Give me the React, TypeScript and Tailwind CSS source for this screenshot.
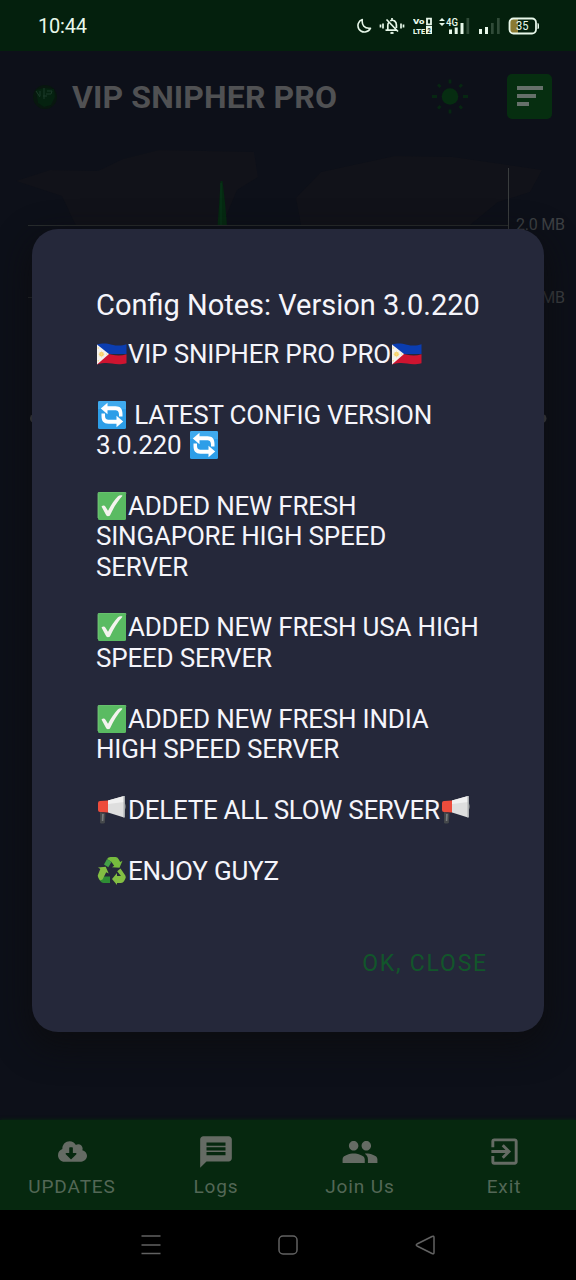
import type { ReactNode } from "react";
import { FaCloudDownloadAlt } from "react-icons/fa";
import { MdExitToApp, MdMessage, MdPeople } from "react-icons/md";

function Emoji({ children }: { children: ReactNode }) {
  return (
    <svg viewBox="0 0 32 28" className="inline-block h-7 w-8 align-[-5px]">
      {children}
    </svg>
  );
}

function Flag() {
  return (
    <Emoji>
      <path d="M1 4.500C7 2.700 11 3.500 16 4.700S26 6 30.500 4.200V14H1Z" fill="#0b3db0" />
      <path d="M1 14.500c6-1.600 10-.8 15 .2s10 1 14.500-.5v9c-6 1.400-10 1-14.500.3s-9-.9-15 1Z" fill="#ce1430" />
      <path d="M1 4.500 13 14 1 24.500Z" fill="#f4f2f0" />
      <circle cx="5.500" cy="14.200" r="2.200" fill="#f7c948" />
      <path d="M5.500 10.800v6.800M2.200 14.200h6.600M3.200 11.900l4.600 4.600M7.800 11.900l-4.600 4.600" stroke="#f9dc90" strokeWidth=".6" />
      <circle cx="2.200" cy="8" r=".7" fill="#f7d978" />
      <circle cx="2.200" cy="20.800" r=".7" fill="#f7d978" />
      <circle cx="10.800" cy="14.100" r=".7" fill="#f7d978" />
    </Emoji>
  );
}

function Refresh() {
  return (
    <Emoji>
      <rect x="2" y="0" width="28" height="28" rx="1.500" fill="#2d9ee8" />
      <path d="M2 1.500Q2 0 3.500 0h25Q30 0 30 1.500V8H2Z" fill="#3faaee" />
      <path d="M4.800 7.500 11.500 1.800v3.500h8c5 0 7 2.700 7 7.700v2.500h-3.500v-1.700c0-3.400-1.200-4.600-4.300-4.600h-7.200v4Z" fill="#fff" />
      <path d="M27.200 20.500 20.500 26.200v-3.500h-8c-5 0-7-2.700-7-7.700v-2.500h3.500v1.700c0 3.400 1.200 4.600 4.300 4.600h7.200v-4Z" fill="#fff" />
    </Emoji>
  );
}

function Check() {
  return (
    <Emoji>
      <rect x="2" y="0" width="28" height="28" rx="1.500" fill="#5abb62" />
      <path d="M2 26V1.500Q2 0 3.500 0h25Q30 0 30 1.500" fill="none" stroke="#7ccb80" strokeWidth=".8" />
      <path d="M5.500 14.500c1.500-1.500 3-1.300 4 .2l2.500 4.100c3-6 6.500-10.800 10-14.500 1.200-1.100 3.500-1.200 4.500-.5-5 5.500-9 12-12.300 19.200-.7 1.500-3.200 1.600-4 .2Z" fill="#f4f3ee" />
    </Emoji>
  );
}

function Megaphone() {
  return (
    <Emoji>
      <path d="m4 16 5.500 1.500-.7 9.500q-3 1.200-4.700 0Z" fill="#45484b" />
      <path d="M6 18h1.800l-.5 7H5.800Z" fill="#777b7d" />
      <path d="M2 7q0-2 2-2l8-.4v12L4 16q-2 0-2-2Z" fill="#ed4c3c" />
      <path d="M12 4.500 28 0v21.500l-16-5Z" fill="#dedede" />
      <path d="M12 4.500 28 0v6L12 8Z" fill="#f0f0f0" />
      <path d="M27.500 0h1.500v21.500h-1.500Z" fill="#a9acae" />
      <path d="M29 7.500q2 3 0 6Z" fill="#6b6e73" />
    </Emoji>
  );
}

function Recycle() {
  return (
    <Emoji>
      <path d="M11 2Q12.300 0 14.500 0h5q2 0 3 2l1.700 3 2.300-1.200-3 7-7.500-.6 2.200-1.400-2.700-3.900Z" fill="#76bb3e" />
      <path d="m11 2 4.500 2.900-3.200 5.400L8 7.500Z" fill="#43a047" />
      <path d="m24.500 11.500 4.800 7q1 1.700 0 3.300l-1.300 2.400q-1 1.800-3 1.800h-4v2l-5-6 5-6v3h4l-3.800-4.700Z" fill="#83be43" />
      <path d="M7.500 19.500H14V26H7.500q-2 0-3-1.700L2.500 21q2-1 5-1.500Z" fill="#2f8e35" />
      <path d="M4.300 11.900 2 10.500l7.700-.7 3 6.700-2.500-1.200-3.700 7.200L4 23.500 2.200 20.500q-1-1.700 0-3.300Z" fill="#83be43" />
    </Emoji>
  );
}

function StatusBar() {
  return (
    <div className="flex h-[51px] shrink-0 items-start bg-[#04200d] pl-[38px] text-[#e8f8ea]">
      <span className="mt-[14px] w-[319px] text-[20px] leading-6 tracking-[-0.2px]">10:44</span>
      <svg viewBox="0 0 15 20" className="mt-4 h-5 w-[15px] shrink-0">
        <path d="M5.300 3.500C4.500 9 7.500 13 13.500 12.200 11.500 16.500 5 17.500 2 13.200-.2 9.500 1.200 5 5.300 3.500Z" fill="none" stroke="currentColor" strokeWidth="1.600" strokeLinejoin="round" />
      </svg>
      <svg viewBox="0 0 26 20" className="ml-[7px] mt-4 h-5 w-[26px] shrink-0" fill="none" stroke="currentColor" strokeWidth="1.700">
        <path d="M1.500 8.500v3M4 7.500v5M24.500 8.500v3M22 7.500v5M6.500 14.200h11M8.800 14V9.500q0-2 1-3M11.200 4.800c3.500-1.700 6.200.9 6.200 4.100v3M7.500 3.500l11.500 12M13 2v2M11.500 16.500q1.500 1.200 3 0" />
      </svg>
      <svg viewBox="0 0 20 20" className="ml-2 mt-4 h-5 w-5 shrink-0" fill="currentColor">
        <text x="0" y="8" fontSize="8" fontWeight="900" textLength="11.500" lengthAdjust="spacingAndGlyphs">Vo</text>
        <text x="0" y="18" fontSize="8" fontWeight="900" textLength="12" lengthAdjust="spacingAndGlyphs">LTE</text>
        <path d="M14 2.700h4v5.600h-4Z" fill="none" stroke="currentColor" strokeWidth="1.800" />
        <rect x="13" y="10" width="6" height="8" />
        <text x="14.500" y="16.800" fontSize="7" fontWeight="700" fill="#04200d" textLength="3.200" lengthAdjust="spacingAndGlyphs">2</text>
      </svg>
      <svg viewBox="0 0 31 20" className="ml-[6px] mt-4 h-5 w-[31px] shrink-0" fill="currentColor">
        <path d="m3 2 3 3H0ZM3 10 0 7h6Z" />
        <text x="7" y="9.500" fontSize="11.500" fontWeight="500" textLength="12" lengthAdjust="spacingAndGlyphs">4G</text>
        <path d="M10 13.500h3V18h-3ZM15.700 11.500h3V18h-3ZM21.500 7h3v11h-3Z" />
        <path d="M27.500 2h2.700v16h-2.700Z" fill="#304b38" />
      </svg>
      <svg viewBox="0 0 22 20" className="ml-[9px] mt-4 h-5 w-[22px] shrink-0" fill="currentColor">
        <path d="M0 13h3v5H0ZM6 11h3v7H6Z" />
        <path d="M12 7h2.700v11H12ZM18 2h2.700v16H18Z" fill="#304b38" />
      </svg>
      <svg viewBox="0 0 32 20" className="ml-[7px] mt-4 h-5 w-8 shrink-0">
        <path d="M4 3h6v14H4q-2 0-2-3V6q0-3 2-3Z" fill="#8b7a32" />
        <rect x="1.500" y="2.500" width="26.500" height="15" rx="4" fill="none" stroke="currentColor" strokeWidth="1.800" />
        <path d="M29.500 7q1.500 0 1.500 1.500v3q0 1.500-1.500 1.500Z" fill="currentColor" />
        <text x="8" y="14" fontSize="12.500" textLength="12.500" lengthAdjust="spacingAndGlyphs" fill="currentColor">35</text>
      </svg>
    </div>
  );
}

function Header() {
  return (
    <header className="flex h-[91px] shrink-0 items-center pl-[31px] pr-6">
      <svg viewBox="0 0 28 28" className="h-7 w-7 shrink-0">
        <circle cx="14" cy="14" r="12" fill="#08170f" />
        <path d="m5 7 8-2 10 1 1 8-4 8-7 2-6-4Z" fill="#052210" />
        <path d="m5 8 4 6M9 8v5M13 5v11M12 13h4M16 8h5l-1 3h-5" stroke="#1d3a2a" strokeWidth="1" fill="none" />
      </svg>
      <h1 className="ml-[13px] mt-px w-[356px] whitespace-nowrap text-[32px] font-bold leading-10 tracking-[0.12px] text-[#505153]">VIP SNIPHER PRO</h1>
      <svg viewBox="0 0 44 44" className="h-11 w-11 shrink-0">
        <circle cx="22" cy="21.500" r="8.300" fill="#062d11" />
        <path d="M22 4.500v4M22 34.500v4M4 21.500h5M35 21.500h5M10 9.500l2.500 2.500M31.500 31l2.500 2.500M10 33.500l2.500-2.500M31.500 12l2.500-2.500" stroke="#072712" strokeWidth="2.800" />
      </svg>
      <button className="ml-[35px] flex h-[45px] w-[45px] shrink-0 flex-col gap-1 rounded-[5px] bg-[#062e10] pl-[10px] pt-3">
        <span className="h-1 w-[26px] bg-[#66706a]" />
        <span className="h-1 w-[19px] bg-[#66706a]" />
        <span className="h-1 w-3 bg-[#66706a]" />
      </button>
    </header>
  );
}

function TrafficChart() {
  return (
    <svg viewBox="0 0 576 300" className="mt-px h-[300px] w-[576px] shrink-0">
      <g fill="#111219">
        <path d="M16 38 50 27l48 1 25-12 36-9 95 2 4 25-21 13-15 36H76L62 53Z" />
        <path d="m296 55 25-26 74-16 58 1 89 13-12 22-32 10-28 23H301Z" />
      </g>
      <path d="M217.500 83q2-25 3-45h2q3 22 4.500 45Z" fill="#052a11" />
      <path d="M221 40v43" stroke="#08391a" />
      <path d="M28 82.500h480M28 154.500h480" stroke="#292d2e" />
      <path d="M508.500 25v232" stroke="#3a3d3e" />
      <text x="516" y="87" fontSize="16" textLength="49" fill="#3e4144">2.0 MB</text>
      <text x="516" y="160" fontSize="16" textLength="49" fill="#3e4144">1.0 MB</text>
      <rect x="30" y="271" width="12" height="9" rx="4.500" fill="#4c4d50" />
      <rect x="535" y="271" width="11.500" height="9" rx="4.500" fill="#4c4d50" />
    </svg>
  );
}

function NavItem({ icon, label }: { icon: ReactNode; label: string }) {
  return (
    <button className="flex w-36 flex-col items-center pt-3">
      <span className="flex h-[39px] items-center text-[#656b64]">{icon}</span>
      <span className="mt-1 text-[19px] leading-6 tracking-[0.9px]">{label}</span>
    </button>
  );
}

function ConfigDialog() {
  return (
    <section role="dialog" className="absolute left-8 top-[229px] flex h-[803px] w-[512px] flex-col rounded-[26px] bg-[#25283a] px-16 pt-[58px] text-[#f5f5fb] shadow-[0_12px_32px_4px_rgba(13,13,15,0.8)]">
      <h2 className="whitespace-nowrap text-[29px] leading-9">Config Notes: Version 3.0.220</h2>
      <p className="mt-[15.700px] whitespace-nowrap text-[26px] leading-[30.400px] tracking-[-0.2px]">
        <Flag />VIP SNIPHER PRO PRO<Flag /><br />
        <br />
        <Refresh /> LATEST CONFIG VERSION<br />
        3.0.220 <Refresh /><br />
        <br />
        <Check />ADDED NEW FRESH<br />
        SINGAPORE HIGH SPEED<br />
        SERVER<br />
        <br />
        <Check />ADDED NEW FRESH USA HIGH<br />
        SPEED SERVER<br />
        <br />
        <Check />ADDED NEW FRESH INDIA<br />
        HIGH SPEED SERVER<br />
        <br />
        <span className="tracking-[-0.3px]"><Megaphone />DELETE ALL SLOW SERVER<Megaphone /></span><br />
        <br />
        <Recycle />ENJOY GUYZ
      </p>
      <button className="-mr-2 mt-[63.500px] self-end text-[23px] leading-7 tracking-[1.800px] text-[#12562b]">OK, CLOSE</button>
    </section>
  );
}

export default function App() {
  return (
    <div className="relative flex h-[1280px] w-[576px] flex-col overflow-hidden bg-[#0d1019] font-[Roboto,sans-serif]">
      <StatusBar />
      <Header />
      <main className="flex-1">
        <TrafficChart />
      </main>
      <nav className="flex h-[90px] shrink-0 bg-[#06280f] text-[#536756] shadow-[0_-1px_3px_#092012]">
        <NavItem icon={<FaCloudDownloadAlt size={29} />} label="UPDATES" />
        <NavItem icon={<MdMessage size={38} />} label="Logs" />
        <NavItem icon={<MdPeople size={38} />} label="Join Us" />
        <NavItem icon={<MdExitToApp size={35} />} label="Exit" />
      </nav>
      <footer className="flex h-[70px] shrink-0 items-center justify-center gap-[117px] bg-black text-[#626262]">
        <svg viewBox="0 0 20 20" className="h-5 w-5" stroke="currentColor" strokeWidth="1.500">
          <path d="M.5 1h19M.5 10h19M.5 18.500h19" />
        </svg>
        <svg viewBox="0 0 20 20" className="h-5 w-5" stroke="currentColor" strokeWidth="1.500" fill="none">
          <rect x="1" y="1" width="18" height="18" rx="4" />
        </svg>
        <svg viewBox="0 0 20 20" className="h-5 w-5" stroke="currentColor" strokeWidth="1.500" fill="none" strokeLinejoin="round">
          <path d="M17 1.500Q19 .5 19 2.500v15q0 2-2 1L2 11q-1.500-1 0-2Z" />
        </svg>
      </footer>
      <ConfigDialog />
    </div>
  );
}
